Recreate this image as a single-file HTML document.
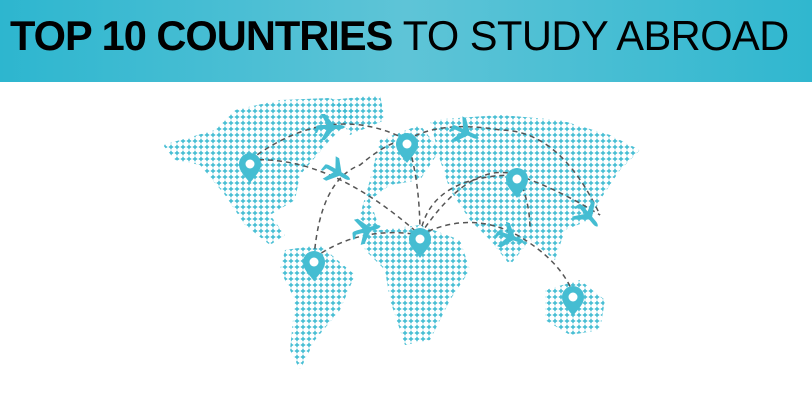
<!DOCTYPE html>
<html><head><style>
body{margin:0;width:812px;height:407px;background:#fff;overflow:hidden;font-family:"Liberation Sans",sans-serif}
.h{height:82px;background:linear-gradient(90deg,#2db6cf 0%,#5ec4d7 50%,#30b7cf 100%);position:relative}
.t{position:absolute;left:10px;top:15px;font-size:42px;line-height:1;letter-spacing:-0.5px;color:#000;white-space:nowrap;transform-origin:0 0;transform:scaleX(0.99)}
.t b{font-weight:900;letter-spacing:-1px}
</style></head><body>
<div class="h"><div class="t"><b>TOP 10 COUNTRIES</b> <span>TO STUDY ABROAD</span></div></div>
<svg width="812" height="325" viewBox="0 82 812 325" style="position:absolute;left:0;top:82px">
<defs>
<pattern id="p" width="6" height="6" patternUnits="userSpaceOnUse">
<path d="M3 0.8V5.2M0.8 3H5.2" stroke="#3bbad1" stroke-width="1.4"/>
</pattern>
<g id="pin"><path d="M0 0C-6 -8 -11 -12 -11 -19A11 11 0 0 1 11 -19C11 -12 6 -8 0 0Z" fill="#45bdd2"/><circle cx="0" cy="-19" r="4.5" fill="#fff"/></g>
<g id="pl"><path d="M-14 0C-14 -2 -10 -2 -6 -2L-3 -2L-9 -13L-5 -13L4 -2L10 -2C14 -2 15 0 15 0C15 0 14 2 10 2L4 2L-5 13L-9 13L-3 2L-6 2L-11 2L-13 6L-15 6L-14 0Z" fill="#45bdd2"/></g>
</defs>
<g fill="url(#p)">
<polygon points="163,145 215,130 235,110 280,100 330,98 360,110 330,140 300,175 295,200 270,215 285,235 270,245 245,225 225,195 200,165 175,160"/>
<polygon points="330,100 380,95 385,120 350,135"/>
<polygon points="285,250 320,245 355,275 340,310 315,340 300,370 290,350 295,300 280,270"/>
<polygon points="380,140 420,125 440,150 420,180 390,185 370,200 380,230 420,225 460,240 470,270 450,300 430,340 405,345 390,300 385,270 365,250 360,215 370,180"/>
<polygon points="430,120 500,115 560,120 610,135 640,150 620,170 600,200 590,220 565,230 555,260 530,240 510,265 490,240 470,220 450,190 440,160"/>
<polygon points="545,290 580,280 605,300 600,330 570,335 545,320"/>
</g>
<g fill="none" stroke="#555" stroke-width="1.5" stroke-dasharray="5 4">
<path d="M250 160Q330 100 407 140"/>
<path d="M250 160Q330 155 420 235"/>
<path d="M407 140Q440 120 500 130Q560 130 600 215"/>
<path d="M407 140Q420 180 420 235"/>
<path d="M314 258Q320 180 360 165Q390 140 407 140"/>
<path d="M314 258Q360 225 420 235"/>
<path d="M420 235Q430 175 517 175"/>
<path d="M517 175Q560 190 600 215"/>
<path d="M420 235Q470 210 517 235Q560 260 573 293"/>
<path d="M420 235Q470 160 517 175Q530 200 530 230"/>
</g>
<use href="#pin" x="250" y="183"/>
<use href="#pin" x="407" y="163"/>
<use href="#pin" x="517" y="198"/>
<use href="#pin" x="420" y="258"/>
<use href="#pin" x="314" y="281"/>
<use href="#pin" x="573" y="316"/>
<use href="#pl" transform="translate(330,127)"/>
<use href="#pl" transform="translate(337,172) rotate(30)"/>
<use href="#pl" transform="translate(465,132) rotate(25)"/>
<use href="#pl" transform="translate(366,230) rotate(-15)"/>
<use href="#pl" transform="translate(510,237) rotate(20)"/>
<use href="#pl" transform="translate(588,215) rotate(50)"/>
</svg>
</body></html>
